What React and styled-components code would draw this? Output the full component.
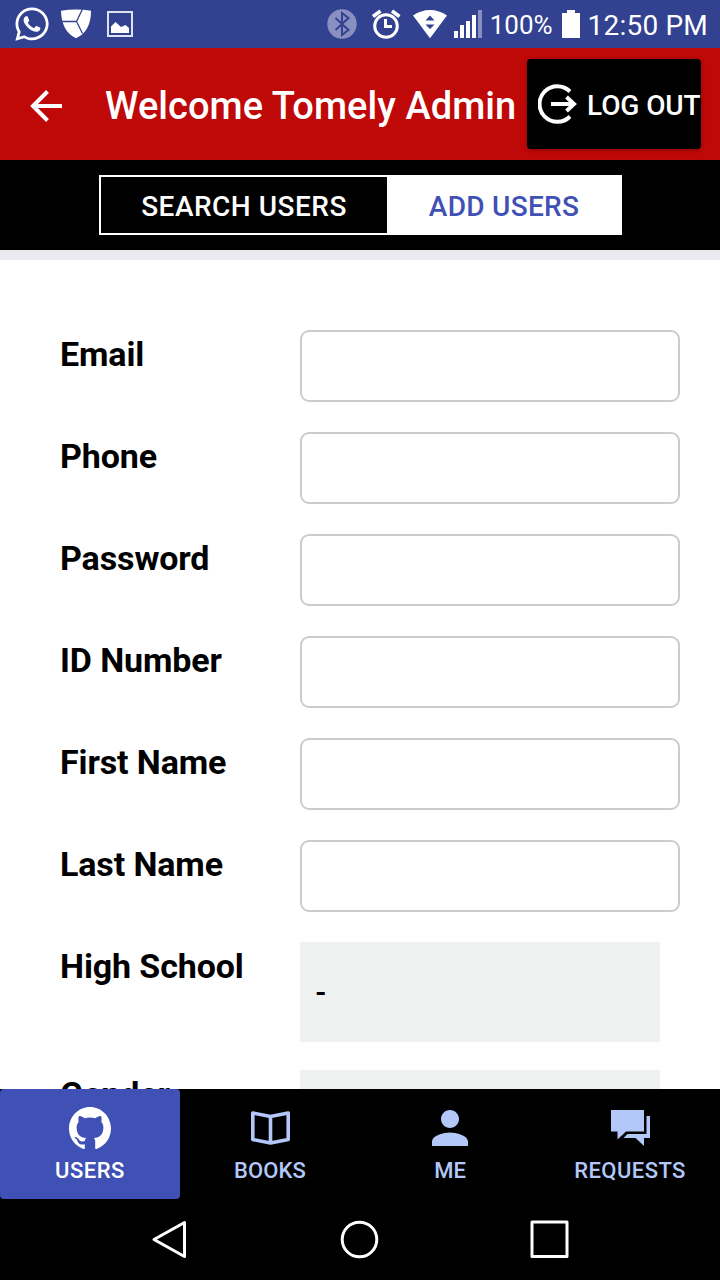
import React from 'react';
import styled, { createGlobalStyle } from 'styled-components';
import { IoLogoGithub, IoMdPerson } from 'react-icons/io';
import { FaWhatsapp } from 'react-icons/fa';

const GlobalStyle = createGlobalStyle`
  * { box-sizing: border-box; }
  body { margin: 0; background: #fff; font-family: Roboto, "Liberation Sans", sans-serif; }
  button { font-family: inherit; border: 0; padding: 0; margin: 0; }
  svg { display: block; flex: none; }
`;

const Screen = styled.div`
  width: 720px;
  height: 1280px;
  display: flex;
  flex-direction: column;
  overflow: hidden;
  background: #fff;
`;

const StatusBar = styled.div`
  height: 48px;
  flex: none;
  display: flex;
  align-items: center;
  justify-content: space-between;
  padding: 0 12px 0 13px;
  background: #334191;
  color: #fff;
`;

const StatusGroup = styled.div`
  display: flex;
  align-items: center;
  height: 48px;
`;

const StatusText = styled.span`
  font-size: ${(p) => p.$size}px;
  line-height: 45px;
  padding-top: 3px;
  letter-spacing: ${(p) => p.$spacing || 0}px;
  margin-left: ${(p) => p.$gap}px;
  white-space: nowrap;
`;

const Header = styled.header`
  height: 112px;
  flex: none;
  display: flex;
  align-items: center;
  padding: 0 19px 0 30px;
  background: #bf0808;
`;

const BackButton = styled.button`
  width: 75px;
  flex: none;
  padding-top: 4px;
  background: none;
`;

const Title = styled.h1`
  flex: 1;
  margin: 0;
  padding-top: 4px;
  color: #fff;
  font-size: 38px;
  font-weight: 500;
  letter-spacing: 0.05px;
  line-height: 48px;
  white-space: nowrap;
`;

const LogoutButton = styled.button`
  width: 174px;
  height: 90px;
  flex: none;
  display: flex;
  align-items: center;
  gap: 10px;
  padding-left: 11px;
  border-radius: 4px;
  background: #000;
  color: #fff;
  box-shadow: 0 1px 4px rgba(0, 0, 0, 0.3);
  font-size: 28px;
  font-weight: 500;
  letter-spacing: -0.1px;
  white-space: nowrap;
`;

const LogoutText = styled.span`
  padding-top: 2px;
`;

const SegmentBar = styled.div`
  height: 100px;
  flex: none;
  display: flex;
  justify-content: center;
  padding: 15px 0 15px 1px;
  background: #000;
  border-bottom: 10px solid #e9e9ef;
`;

const Segment = styled.button`
  width: ${(p) => p.$width}px;
  height: 60px;
  border: 2px solid #fff;
  background: ${(p) => (p.$active ? '#fff' : '#000')};
  color: ${(p) => (p.$active ? '#3f51b5' : '#fff')};
  font-size: 28px;
  font-weight: 500;
  letter-spacing: ${(p) => p.$spacing}px;
  line-height: 56px;
  padding: 2px ${(p) => (p.$active ? 3 : 0)}px 0 0;
  white-space: nowrap;
`;

const Form = styled.main`
  flex: 1;
  min-height: 0;
  overflow: hidden;
  padding: 70px 40px 0 60px;
`;

const Field = styled.div`
  display: grid;
  grid-template-columns: 240px 380px;
  align-items: start;
  margin-bottom: ${(p) => (p.$picker ? 28 : 30)}px;
`;

const Label = styled.label`
  padding-top: 4px;
  color: #000;
  font-size: 34px;
  font-weight: 700;
  letter-spacing: -0.12px;
  line-height: 40px;
  white-space: nowrap;
`;

const Input = styled.input`
  width: 380px;
  height: 72px;
  border: 2px solid #ccc;
  border-radius: 9px;
  background: #fff;
  outline: none;
`;

const Picker = styled.div`
  width: 360px;
  height: 100px;
  padding: 1px 15.500px 0;
  background: #eff1f0;
  color: #000;
  font-size: 31px;
  font-weight: 500;
  line-height: 100px;
`;

const TabBar = styled.nav`
  height: 110px;
  flex: none;
  display: grid;
  grid-template-columns: repeat(4, 1fr);
  background: #000;
`;

const Tab = styled.button`
  display: flex;
  flex-direction: column;
  align-items: center;
  padding-top: 15px;
  border-radius: 4px;
  background: ${(p) => (p.$active ? '#3f51b5' : '#000')};
  color: ${(p) => (p.$active ? '#fff' : '#b3c7f9')};
`;

const TabLabel = styled.span`
  margin-top: 5px;
  font-size: 22px;
  font-weight: 500;
  letter-spacing: ${(p) => p.$spacing || 0}px;
  line-height: 28px;
`;

const SystemBar = styled.div`
  height: 81px;
  flex: none;
  display: flex;
  align-items: center;
  justify-content: space-between;
  padding: 0 150px 2px 151px;
  background: #000;
`;

const ShieldIcon = () => (
  <svg width="32" height="48" viewBox="60 0 32 48">
    <path d="M61 10.700Q76 8.200 91 10.700Q91 31.500 76 38.200Q61.500 31.500 61 10.700Z" fill="#fff" />
    <path d="M61 21.500H76.500L82.500 9M76.500 21.500L82.500 33.500" fill="none" stroke="#334191" strokeWidth="1.300" />
  </svg>
);

const GalleryIcon = () => (
  <svg width="26" height="26" viewBox="0 0 26 26">
    <path d="M1 1H25V25H1Z" fill="none" stroke="#dfe1ef" strokeWidth="2" />
    <path d="M4 22V15.500L8.500 11L14 16L18.500 14L22 17V22Z" fill="#fff" />
  </svg>
);

const BluetoothIcon = () => (
  <svg width="30" height="48" viewBox="327 0 30 48">
    <circle cx="342" cy="24" r="14.700" fill="#8990bf" />
    <path d="M335.500 18L348.500 30L342 35V13L348.500 18L335.500 30" fill="none" stroke="#334191" strokeWidth="2" />
  </svg>
);

const AlarmIcon = () => (
  <svg width="30" height="48" viewBox="371 0 30 48" fill="none" stroke="#fff">
    <circle cx="386" cy="26" r="11.300" strokeWidth="3" />
    <path d="M373 16.500L380.500 11M399.500 16.500L392 11" strokeWidth="3.600" />
    <path d="M385.500 19V26.500H392" strokeWidth="3" />
  </svg>
);

const WifiIcon = () => (
  <svg width="36" height="48" viewBox="412 0 36 48">
    <path d="M413 15.500Q421 10 430 10Q439 10 447 15.500L430 38.300Z" fill="#fff" />
    <path d="M425.500 20.500L430 15.500L434.500 20.500ZM425.500 24.500H434.500L430 29Z" fill="#334191" />
  </svg>
);

const SignalIcon = () => (
  <svg width="30" height="48" viewBox="453 0 30 48" fill="#fff">
    <path d="M454 31h4v7h-4zM460 25h4v13h-4zM466 21h4v17h-4zM472 15h4v23h-4z" />
    <path d="M478 10h4v28h-4z" fill="#8990bf" />
  </svg>
);

const BatteryIcon = () => (
  <svg width="18" height="48" viewBox="563 0 18 48" fill="#fff">
    <path d="M563 13H568V10H576V13H581V38H563Z" />
  </svg>
);

const BackArrow = () => (
  <svg width="32" height="32" viewBox="0 0 32 32" fill="none" stroke="#fff" strokeWidth="4">
    <path d="M17.500 1.500L3 16L17.500 30.500M3 16H32" />
  </svg>
);

const LogoutIcon = () => (
  <svg width="39" height="42" viewBox="538 83 39 42" fill="none" stroke="#fff" strokeWidth="4">
    <path d="M570 91.500A17.800 17.800 0 1 0 570 116.500" />
    <path d="M551 104H575M566.500 97L574 104L566.500 111" />
  </svg>
);

const BookIcon = () => (
  <svg width="48" height="48" viewBox="246 1104 48 48" fill="none" stroke="#b3c7f9" strokeWidth="3.600" strokeLinejoin="round">
    <path d="M252.800 1113L270.500 1116.500L288.200 1113V1139.500L270.500 1143L252.800 1139.500ZM270.500 1116.500V1143" />
  </svg>
);

const ChatIcon = () => (
  <svg width="48" height="48" viewBox="606 1104 48 48" fill="currentColor">
    <path d="M611 1110H644V1131.500H626L617.500 1139.500V1131.500H611Z" />
    <path d="M646.500 1116H650V1138H644V1146L635.500 1138H623.500L627.500 1134H646.500Z" />
  </svg>
);

const SystemIcons = () => (
  <>
    <svg width="38" height="40" viewBox="151 1219 38 40" fill="none" stroke="#fff" strokeWidth="3" strokeLinejoin="round">
      <path d="M184.500 1222.500V1256.500L154 1239.500Z" />
    </svg>
    <svg width="40" height="40" viewBox="339.500 1219 40 40" fill="none" stroke="#fff" strokeWidth="3">
      <circle cx="359" cy="1239.500" r="17.300" />
    </svg>
    <svg width="40" height="40" viewBox="530 1219 40 40" fill="none" stroke="#fff" strokeWidth="3" strokeLinejoin="round">
      <path d="M532 1222H567V1256.500H532Z" />
    </svg>
  </>
);

const Spaced = styled.span`
  margin-left: ${(p) => p.$gap}px;
`;

const textFields = ['Email', 'Phone', 'Password', 'ID Number', 'First Name', 'Last Name'];

export default function App() {
  return (
    <Screen>
      <GlobalStyle />
      <StatusBar>
        <StatusGroup>
          <FaWhatsapp size={38} />
          <Spaced $gap={9}><ShieldIcon /></Spaced>
          <Spaced $gap={15}><GalleryIcon /></Spaced>
        </StatusGroup>
        <StatusGroup>
          <BluetoothIcon />
          <Spaced $gap={14}><AlarmIcon /></Spaced>
          <Spaced $gap={11}><WifiIcon /></Spaced>
          <Spaced $gap={5}><SignalIcon /></Spaced>
          <StatusText $size={26} $gap={7}>100%</StatusText>
          <Spaced $gap={9}><BatteryIcon /></Spaced>
          <StatusText $size={28} $gap={8} $spacing={0.2}>12:50 PM</StatusText>
        </StatusGroup>
      </StatusBar>
      <Header>
        <BackButton aria-label="Back"><BackArrow /></BackButton>
        <Title>Welcome Tomely Admin</Title>
        <LogoutButton><LogoutIcon /><LogoutText>LOG OUT</LogoutText></LogoutButton>
      </Header>
      <SegmentBar>
        <Segment $width={290} $spacing={0.5}>SEARCH USERS</Segment>
        <Segment $width={233} $spacing={0.3} $active>ADD USERS</Segment>
      </SegmentBar>
      <Form>
        {textFields.map((name) => (
          <Field key={name}>
            <Label>{name}</Label>
            <Input aria-label={name} />
          </Field>
        ))}
        <Field $picker>
          <Label>High School</Label>
          <Picker>-</Picker>
        </Field>
        <Field $picker>
          <Label>Gender</Label>
          <Picker />
        </Field>
      </Form>
      <TabBar>
        <Tab $active><IoLogoGithub size={48} /><TabLabel $spacing={0.5}>USERS</TabLabel></Tab>
        <Tab><BookIcon /><TabLabel $spacing={0.1}>BOOKS</TabLabel></Tab>
        <Tab><IoMdPerson size={48} /><TabLabel>ME</TabLabel></Tab>
        <Tab><ChatIcon /><TabLabel $spacing={0.45}>REQUESTS</TabLabel></Tab>
      </TabBar>
      <SystemBar><SystemIcons /></SystemBar>
    </Screen>
  );
}
